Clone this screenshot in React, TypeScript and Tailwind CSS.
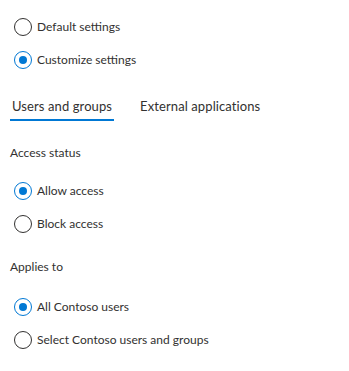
import React from "react";

function Radio({ checked, label }: { checked?: boolean; label: string }) {
  return (
    <div className="flex h-[33px] items-center pl-[14px]">
      <span
        className={
          "flex h-[18px] w-[18px] shrink-0 items-center justify-center rounded-full border " +
          (checked ? "border-[#0078d4]" : "border-[#323130]")
        }
      >
        {checked && <span className="h-[8px] w-[8px] rounded-full bg-[#0078d4]" />}
      </span>
      <span className="ml-[5px] text-[12px] leading-[20px] text-[#323130]">{label}</span>
    </div>
  );
}

export default function App() {
  return (
    <div
      className="h-[371px] w-[349px] bg-white pt-[10px]"
      style={{ fontFamily: 'Lato, "Noto Sans", sans-serif' }}
    >
      <Radio label="Default settings" />
      <Radio checked label="Customize settings" />

      <div className="mt-[20px] flex pl-[10px]">
        <div className="flex flex-col">
          <span className="px-[2px] text-[13px] leading-[20px] tracking-[0.1px] text-[#323130]">Users and groups</span>
          <span className="mt-[3px] h-[2px] bg-[#0078d4]" />
        </div>
        <div className="ml-[24px] flex flex-col">
          <span className="px-[2px] text-[13px] leading-[20px] tracking-[0.1px] text-[#323130]">External applications</span>
        </div>
      </div>

      <div className="mt-[22px] pl-[10px] text-[12px] leading-[20px] text-[#323130]">Access status</div>
      <div className="mt-[11px]">
        <Radio checked label="Allow access" />
        <Radio label="Block access" />
      </div>

      <div className="mt-[17px] pl-[10px] text-[12px] leading-[20px] text-[#323130]">Applies to</div>
      <div className="mt-[13px]">
        <Radio checked label="All Contoso users" />
        <Radio label="Select Contoso users and groups" />
      </div>
    </div>
  );
}
